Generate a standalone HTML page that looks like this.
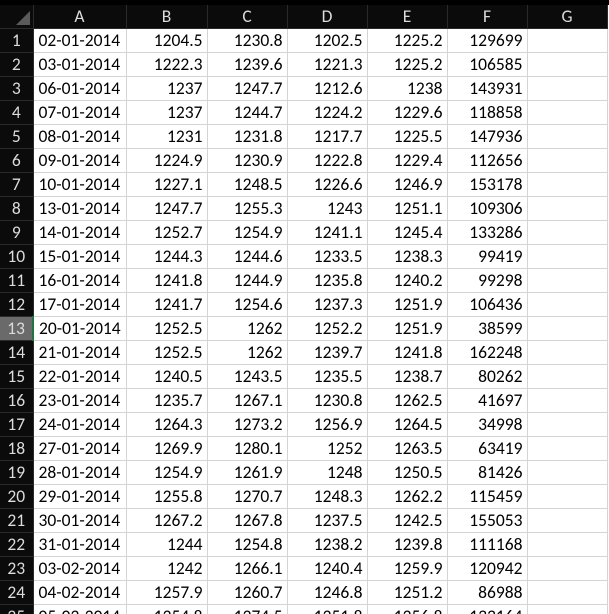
<!DOCTYPE html>
<html style="height:614px;overflow:hidden"><head><style>
body{margin:0;background:#fff;width:609px;height:614px;overflow:hidden;position:relative;font-family:Carlito,Calibri,"Liberation Sans",sans-serif}
.top{position:absolute;left:0;top:0;width:609px;height:5px;background:#000}
table{position:absolute;left:0;top:5px;border-collapse:collapse;table-layout:fixed;font-size:17.5px}
td{height:23px;padding:0 4px;border-right:1px solid #d4d4d4;border-bottom:1px solid #d4d4d4;white-space:nowrap;overflow:hidden;text-align:right;color:#000;line-height:23px}
td.a{text-align:left;padding-left:5px}
tr.h td{background:#0b0b0b;color:#dcdcdc;text-align:center;border-right:1px solid #2a2a2a;border-bottom:1px solid #2a2a2a}
td.r{background:#0b0b0b;color:#dcdcdc;text-align:center;border-right:1px solid #2a2a2a;border-bottom:1px solid #2a2a2a;padding:0}
td.sel{background:#6a6a6a;border-right:2px solid #217346}
.corner{position:relative}
.corner:after{content:"";position:absolute;right:3px;bottom:3px;border-left:14px solid transparent;border-bottom:14px solid #5a5a5a}
</style></head><body>
<div class="top"></div>
<table>
<colgroup><col style="width:33px"><col style="width:93px"><col style="width:81px"><col style="width:80px"><col style="width:80px"><col style="width:80px"><col style="width:80px"><col style="width:80px"></colgroup>
<tr class="h"><td class="corner"></td><td>A</td><td>B</td><td>C</td><td>D</td><td>E</td><td>F</td><td>G</td></tr>
<tr><td class="r">1</td><td class="a">02-01-2014</td><td>1204.5</td><td>1230.8</td><td>1202.5</td><td>1225.2</td><td>129699</td><td></td></tr>
<tr><td class="r">2</td><td class="a">03-01-2014</td><td>1222.3</td><td>1239.6</td><td>1221.3</td><td>1225.2</td><td>106585</td><td></td></tr>
<tr><td class="r">3</td><td class="a">06-01-2014</td><td>1237</td><td>1247.7</td><td>1212.6</td><td>1238</td><td>143931</td><td></td></tr>
<tr><td class="r">4</td><td class="a">07-01-2014</td><td>1237</td><td>1244.7</td><td>1224.2</td><td>1229.6</td><td>118858</td><td></td></tr>
<tr><td class="r">5</td><td class="a">08-01-2014</td><td>1231</td><td>1231.8</td><td>1217.7</td><td>1225.5</td><td>147936</td><td></td></tr>
<tr><td class="r">6</td><td class="a">09-01-2014</td><td>1224.9</td><td>1230.9</td><td>1222.8</td><td>1229.4</td><td>112656</td><td></td></tr>
<tr><td class="r">7</td><td class="a">10-01-2014</td><td>1227.1</td><td>1248.5</td><td>1226.6</td><td>1246.9</td><td>153178</td><td></td></tr>
<tr><td class="r">8</td><td class="a">13-01-2014</td><td>1247.7</td><td>1255.3</td><td>1243</td><td>1251.1</td><td>109306</td><td></td></tr>
<tr><td class="r">9</td><td class="a">14-01-2014</td><td>1252.7</td><td>1254.9</td><td>1241.1</td><td>1245.4</td><td>133286</td><td></td></tr>
<tr><td class="r">10</td><td class="a">15-01-2014</td><td>1244.3</td><td>1244.6</td><td>1233.5</td><td>1238.3</td><td>99419</td><td></td></tr>
<tr><td class="r">11</td><td class="a">16-01-2014</td><td>1241.8</td><td>1244.9</td><td>1235.8</td><td>1240.2</td><td>99298</td><td></td></tr>
<tr><td class="r">12</td><td class="a">17-01-2014</td><td>1241.7</td><td>1254.6</td><td>1237.3</td><td>1251.9</td><td>106436</td><td></td></tr>
<tr><td class="r sel">13</td><td class="a">20-01-2014</td><td>1252.5</td><td>1262</td><td>1252.2</td><td>1251.9</td><td>38599</td><td></td></tr>
<tr><td class="r">14</td><td class="a">21-01-2014</td><td>1252.5</td><td>1262</td><td>1239.7</td><td>1241.8</td><td>162248</td><td></td></tr>
<tr><td class="r">15</td><td class="a">22-01-2014</td><td>1240.5</td><td>1243.5</td><td>1235.5</td><td>1238.7</td><td>80262</td><td></td></tr>
<tr><td class="r">16</td><td class="a">23-01-2014</td><td>1235.7</td><td>1267.1</td><td>1230.8</td><td>1262.5</td><td>41697</td><td></td></tr>
<tr><td class="r">17</td><td class="a">24-01-2014</td><td>1264.3</td><td>1273.2</td><td>1256.9</td><td>1264.5</td><td>34998</td><td></td></tr>
<tr><td class="r">18</td><td class="a">27-01-2014</td><td>1269.9</td><td>1280.1</td><td>1252</td><td>1263.5</td><td>63419</td><td></td></tr>
<tr><td class="r">19</td><td class="a">28-01-2014</td><td>1254.9</td><td>1261.9</td><td>1248</td><td>1250.5</td><td>81426</td><td></td></tr>
<tr><td class="r">20</td><td class="a">29-01-2014</td><td>1255.8</td><td>1270.7</td><td>1248.3</td><td>1262.2</td><td>115459</td><td></td></tr>
<tr><td class="r">21</td><td class="a">30-01-2014</td><td>1267.2</td><td>1267.8</td><td>1237.5</td><td>1242.5</td><td>155053</td><td></td></tr>
<tr><td class="r">22</td><td class="a">31-01-2014</td><td>1244</td><td>1254.8</td><td>1238.2</td><td>1239.8</td><td>111168</td><td></td></tr>
<tr><td class="r">23</td><td class="a">03-02-2014</td><td>1242</td><td>1266.1</td><td>1240.4</td><td>1259.9</td><td>120942</td><td></td></tr>
<tr><td class="r">24</td><td class="a">04-02-2014</td><td>1257.9</td><td>1260.7</td><td>1246.8</td><td>1251.2</td><td>86988</td><td></td></tr>
<tr><td class="r">25</td><td class="a">05-02-2014</td><td>1254.8</td><td>1274.5</td><td>1251.8</td><td>1256.8</td><td>133164</td><td></td></tr>
</table>
</body></html>
